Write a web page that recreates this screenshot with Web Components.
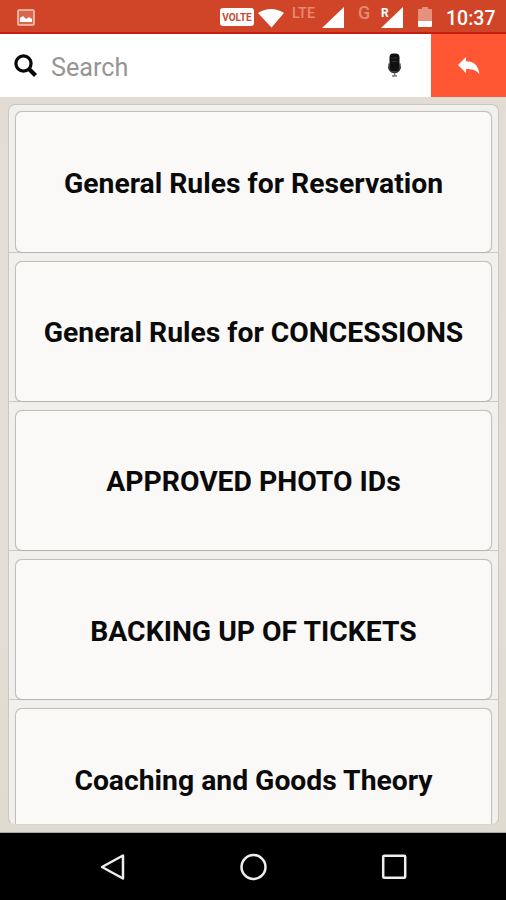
<!DOCTYPE html>
<html lang="en">
<head>
<meta charset="utf-8">
<title>Rules</title>
<style>
body{
    margin:0;
    height:900px;
    display:flex;
    flex-direction:column;
    overflow:hidden;
    background:#e3ddd5;
    font-family:Roboto, 'Liberation Sans', sans-serif;
}
</style>
</head>
<body>
<status-bar></status-bar>
<search-bar placeholder="Search"></search-bar>
<rule-list>
    <rule-card>General Rules for Reservation</rule-card>
    <rule-card>General Rules for CONCESSIONS</rule-card>
    <rule-card>APPROVED PHOTO IDs</rule-card>
    <rule-card>BACKING UP OF TICKETS</rule-card>
    <rule-card>Coaching and Goods Theory</rule-card>
</rule-list>
<nav-bar></nav-bar>

<script>
class StatusBar extends HTMLElement{

    constructor(){
        super();
        this.shadow = this.attachShadow({mode:'open'});
        this.render();
    }

    render(){
        this.shadow.innerHTML = `
        <style>
        :host{
            display:flex;
            align-items:flex-start;
            box-sizing:border-box;
            height:34px;
            background:#d04427;
            border-bottom:2px solid #c5200e;
            color:white;
        }
        svg{ display:block; flex:none; }
        .picture{ margin:9px 0 0 17px; }
        .volte{
            box-sizing:border-box;
            width:34px;
            height:18px;
            margin:8px 0 0 185px;
            border-radius:3px;
            background:white;
            color:#c94a32;
            font-size:10px;
            font-weight:700;
            line-height:19px;
            text-align:center;
        }
        .wifi{ margin:9px 0 0 4px; }
        .dim{ color:#e58a74; font-weight:500; line-height:16px; }
        .lte{ width:27px; margin:6px 0 0 8px; font-size:14.5px; }
        .signal{ margin:7px 0 0 3px; }
        .g{ width:14px; margin:5px 0 0 14px; font-size:18px; }
        .roaming{ margin:6px 0 0 9px; }
        .battery{ margin:7px 0 0 14px; }
        .time{
            margin:7px 0 0 14px;
            font-size:19.5px;
            font-weight:500;
            line-height:23px;
        }
        </style>
        <svg class="picture" width="18" height="17" viewBox="0 0 18 17">
            <rect x="1" y="1" width="16" height="15" rx="1" fill="#da664e" stroke="#f7c6ba" stroke-width="1.6"/>
            <path d="M3 13V9l3-2 3 3 3-2 3 2v3z" fill="white"/>
        </svg>
        <div class="volte">VOLTE</div>
        <svg class="wifi" width="26" height="19" viewBox="0 0 26 19">
            <path d="M0 4Q13-4 26 4L13.500 18.500z" fill="white"/>
        </svg>
        <div class="dim lte">LTE</div>
        <svg class="signal" width="22" height="21" viewBox="0 0 22 21">
            <path d="M22 0v21H0z" fill="white"/>
        </svg>
        <div class="dim g">G</div>
        <svg class="roaming" width="23" height="22" viewBox="0 0 23 22">
            <path d="M22 1v21H0z" fill="white"/>
            <path d="M0 0h9v10L0 18z" fill="#d04427"/>
            <text x="0" y="11" font-size="12" font-weight="700" fill="white">R</text>
        </svg>
        <svg class="battery" width="14" height="20" viewBox="0 0 14 20">
            <path d="M4 0h6v2h3q1 0 1 1v12H0V3q0-1 1-1h3z" fill="#e6917e"/>
            <path d="M0 14h14v5q0 1-1 1H1q-1 0-1-1z" fill="white"/>
        </svg>
        <div class="time">10:37</div>
        `;
    }

}

class SearchBar extends HTMLElement{

    constructor(){
        super();
        this.shadow = this.attachShadow({mode:'open'});
        this.render();
    }

    render(){
        this.shadow.innerHTML = `
        <style>
        :host{
            display:flex;
            height:63px;
            background:white;
        }
        .field{
            flex:1;
            display:flex;
            align-items:center;
            padding:0 29px 0 14px;
        }
        .label{
            flex:1;
            margin:5px 0 0 13px;
            color:#959595;
            font-size:25.2px;
            line-height:30px;
        }
        .back{
            display:flex;
            align-items:center;
            justify-content:center;
            width:75px;
            background:#ff5733;
        }
        svg{ display:block; }
        </style>
        <div class="field">
            <svg width="24" height="24" viewBox="0 0 24 24" fill="none" stroke="#080808">
                <circle cx="9.500" cy="9.500" r="7.600" stroke-width="3.200"/>
                <path d="M15 15l6.500 6.500" stroke-width="4.200" stroke-linecap="butt"/>
            </svg>
            <div class="label">${this.getAttribute('placeholder')}</div>
            <svg width="15" height="25" viewBox="0 0 15 25">
                <path d="M1 10.500q-.5 9.500 6.500 9.500T14 10.500z" fill="#777"/>
                <rect x="2.500" y="0.500" width="10" height="18" rx="4" fill="#111"/>
                <path d="M1.500 13.500q1 6 6 6t6-6" fill="none" stroke="#333" stroke-width="1.500"/>
                <path d="M7.500 20v3M5 23h5" stroke="#777" stroke-width="1.600"/>
                <path d="M4.500 5h6M4.500 8.500h6" stroke="#3c3c3c" stroke-width=".7"/>
            </svg>
        </div>
        <div class="back">
            <svg width="22" height="18" viewBox="0 0 22 18">
                <path d="M0 8L8 0v4.300C16 4.500 20 8 21.500 17 18 13 14.500 12 8 12V16z" fill="white"/>
            </svg>
        </div>
        `;
    }

}

class RuleList extends HTMLElement{

    constructor(){
        super();
        this.shadow = this.attachShadow({mode:'open'});
        this.render();
    }

    render(){
        this.shadow.innerHTML = `
        <style>
        :host{
            display:block;
            box-sizing:border-box;
            height:736px;
            padding:7px 7px 7px 8px;
            background:linear-gradient(to bottom, #e3dcd5 0%, #e4ded6 60%, #dfdbd0 100%);
            border-bottom:1px solid #aaa8a0;
        }
        .frame{
            box-sizing:border-box;
            height:100%;
            overflow:hidden;
            padding-top:6.4px;
            border:1px solid #c9c5c0;
            border-bottom-color:#dad7d1;
            border-radius:7px;
            background:#f2f0ed;
        }
        </style>
        <div class="frame"><slot></slot></div>
        `;
    }

}

class RuleCard extends HTMLElement{

    constructor(){
        super();
        this.shadow = this.attachShadow({mode:'open'});
        this.render();
    }

    render(){
        this.shadow.innerHTML = `
        <style>
        :host{
            display:block;
            box-sizing:border-box;
            height:141.2px;
            margin-bottom:8px;
            padding:0 6px;
            border-bottom:1px solid #cbc8c5;
        }
        .card{
            display:flex;
            align-items:center;
            justify-content:center;
            box-sizing:border-box;
            height:141.2px;
            padding-top:3px;
            border:1px solid #c2c0bd;
            border-bottom-color:#b6b4b2;
            border-radius:7px;
            box-shadow:0 0 1px #c9c7c4;
            background:#faf9f7;
            color:#0a0a0a;
            font-size:28.3px;
            font-weight:700;
            white-space:nowrap;
        }
        </style>
        <div class="card"><span><slot></slot></span></div>
        `;
    }

}

class NavBar extends HTMLElement{

    constructor(){
        super();
        this.shadow = this.attachShadow({mode:'open'});
        this.render();
    }

    render(){
        this.shadow.innerHTML = `
        <style>
        :host{
            display:flex;
            align-items:center;
            justify-content:center;
            gap:113px;
            height:67px;
            background:black;
        }
        svg{ display:block; }
        </style>
        <svg width="28" height="28" viewBox="0 0 28 28" fill="none" stroke="#eee" stroke-width="2.500">
            <path d="M4 14L25 2.500v23z" stroke-linejoin="round"/>
        </svg>
        <svg width="28" height="28" viewBox="0 0 28 28" fill="none" stroke="#eee" stroke-width="2.500">
            <circle cx="14.500" cy="14" r="12"/>
        </svg>
        <svg width="28" height="28" viewBox="0 0 28 28" fill="none" stroke="#eee" stroke-width="2.500">
            <rect x="3.200" y="2.800" width="22" height="22" rx="1"/>
        </svg>
        `;
    }

}

customElements.define('status-bar', StatusBar);
customElements.define('search-bar', SearchBar);
customElements.define('rule-list', RuleList);
customElements.define('rule-card', RuleCard);
customElements.define('nav-bar', NavBar);
</script>
</body>
</html>
